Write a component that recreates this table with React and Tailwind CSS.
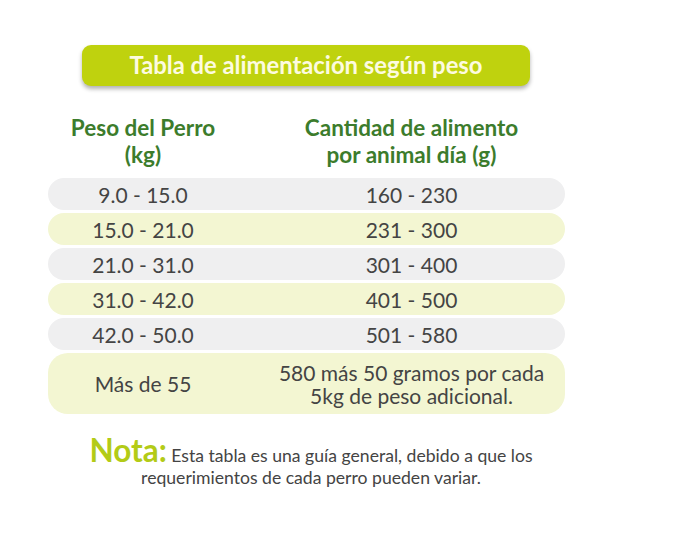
import React from 'react';

const rows = [
  { peso: '9.0 - 15.0', cantidad: ['160 - 230'], tone: 'gray' },
  { peso: '15.0 - 21.0', cantidad: ['231 - 300'], tone: 'lime' },
  { peso: '21.0 - 31.0', cantidad: ['301 - 400'], tone: 'gray' },
  { peso: '31.0 - 42.0', cantidad: ['401 - 500'], tone: 'lime' },
  { peso: '42.0 - 50.0', cantidad: ['501 - 580'], tone: 'gray' },
  { peso: 'Más de 55', cantidad: ['580 más 50 gramos por cada', '5kg de peso adicional.'], tone: 'lime', tall: true },
];

const font = { fontFamily: 'Lato, "Open Sans", sans-serif' };

const App = () => {
  return (
    <div className="w-[693px] h-[549px] bg-white overflow-hidden" style={font}>
      {/* Title pill */}
      <div className="pt-[45px] pl-[82px]">
        <div className="w-[448px] h-[41px] rounded-[9px] bg-[#bfd20e] shadow-[0_3px_4px_rgba(0,0,0,0.3)] flex items-center justify-center">
          <span className="text-[#fdfbe0] font-bold text-[23.8px] leading-none">
            Tabla de alimentación según peso
          </span>
        </div>
      </div>

      {/* Table */}
      <div className="ml-[48px] w-[517px] mt-[28px]">
        <div className="flex text-[#3c7c2c] font-bold text-[22.5px] leading-[27px] text-center">
          <div className="w-[190px]">
            Peso del Perro
            <br />
            (kg)
          </div>
          <div className="w-[327px] pl-[20px]">
            Cantidad de alimento
            <br />
            por animal día (g)
          </div>
        </div>

        <div className="mt-[10px] flex flex-col gap-[3px]">
          {rows.map((row) => (
            <div
              key={row.peso}
              className={`flex items-center text-center text-[#444444] text-[21px] ${
                row.tall ? 'h-[61px] rounded-[20px] leading-[23px]' : 'h-[32px] rounded-[16px] leading-none'
              } ${row.tone === 'gray' ? 'bg-[#efeff0]' : 'bg-[#f3f6d2]'}`}
            >
              <div className="w-[190px]">{row.peso}</div>
              <div className="w-[327px] pl-[20px]">
                {row.cantidad.map((line) => (
                  <div key={line}>{line}</div>
                ))}
              </div>
            </div>
          ))}
        </div>
      </div>

      {/* Note */}
      <div className="mt-[21px] w-[693px] pr-[71px] text-center text-[#444444] text-[17.6px] leading-[21px]">
        <span className="text-[#b3cb17] font-bold text-[31.5px] leading-none">Nota:</span>{' '}
        Esta tabla es una guía general, debido a que los
        <br />
        requerimientos de cada perro pueden variar.
      </div>
    </div>
  );
};

export default App;
